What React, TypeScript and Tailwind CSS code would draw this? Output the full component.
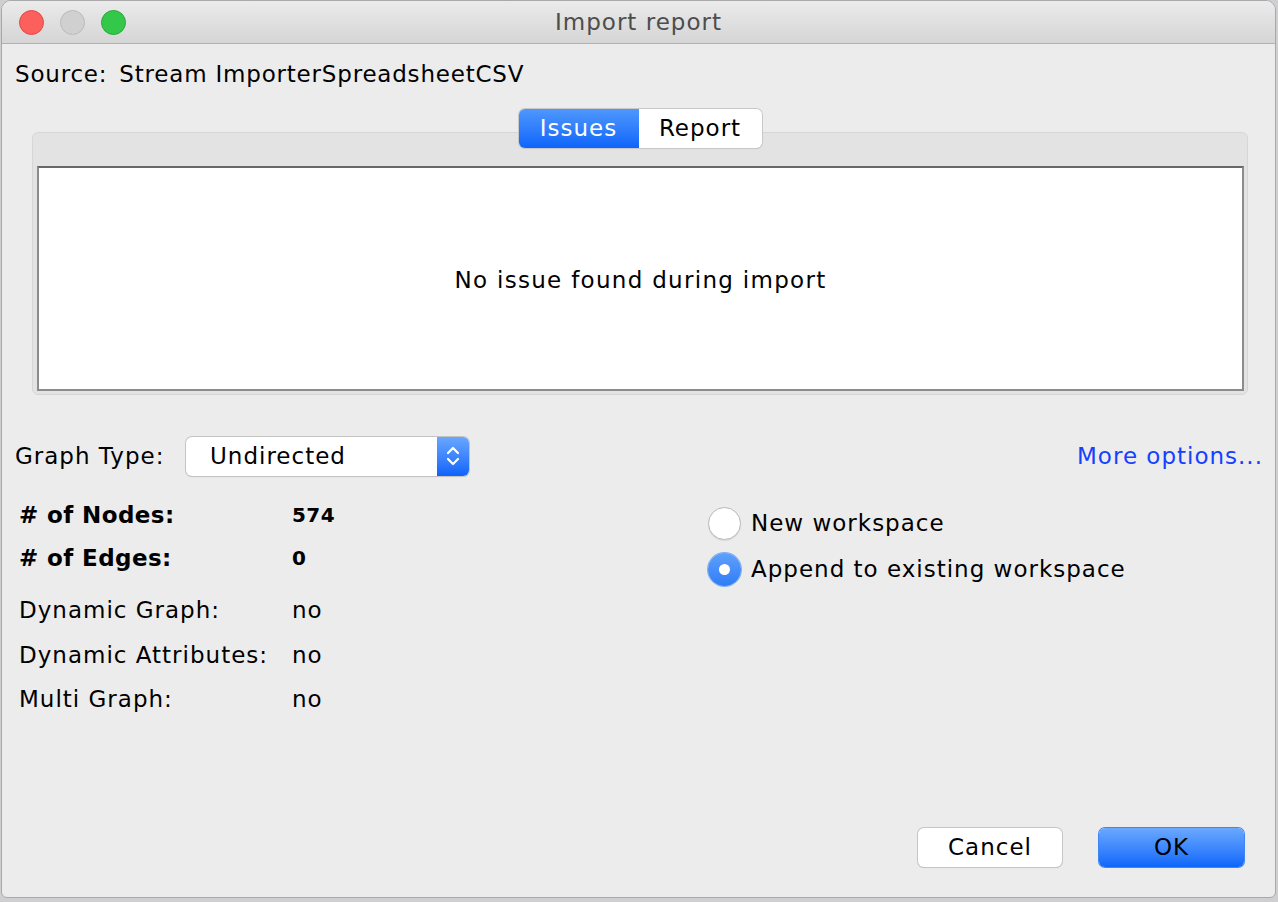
import React from 'react';

const font = { fontFamily: '"DejaVu Sans", "Liberation Sans", sans-serif' };

const StatRow = ({ label, value, bold }: { label: string; value: string; bold?: boolean }) => (
  <div className={`flex items-center h-[26px] ${bold ? 'font-bold tracking-[0.4px]' : ''}`}>
    <span className="w-[273px]">{label}</span>
    <span className={bold ? 'text-[20px]' : ''}>{value}</span>
  </div>
);

const Radio = ({ label, checked }: { label: string; checked?: boolean }) => (
  <div className="flex items-center h-[34px] gap-[10px]">
    {checked ? (
      <span className="w-[33px] h-[33px] rounded-full bg-gradient-to-b from-[#5ea0fb] to-[#2f7cf6] flex items-center justify-center shadow-[0_0_0_1px_#7fb0f8]">
        <span className="w-[11px] h-[11px] rounded-full bg-white" />
      </span>
    ) : (
      <span className="w-[33px] h-[33px] rounded-full bg-white border border-[#b9b9b9] shadow-[0_1px_1px_rgba(0,0,0,0.08)]" />
    )}
    <span>{label}</span>
  </div>
);

export default function App() {
  return (
    <div className="w-[1278px] h-[902px] bg-[#cfcfd2] overflow-hidden text-[23px] tracking-[1px] text-black" style={font}>
      <div className="ml-[1px] w-[1275px] h-[898px] bg-[#ececec] rounded-t-[10px] rounded-b-[6px] border border-[#a9a9a9] overflow-hidden flex flex-col">
        {/* Title bar */}
        <div className="relative h-[43px] shrink-0 bg-gradient-to-b from-[#ebebeb] to-[#d5d5d5] border-b border-[#b1b1b1] flex items-center pl-[17px] gap-[16px]">
          <span className="w-[25px] h-[25px] rounded-full bg-[#fc605c] border border-[#de4a45]" />
          <span className="w-[25px] h-[25px] rounded-full bg-[#d0d0d0] border border-[#bababa]" />
          <span className="w-[25px] h-[25px] rounded-full bg-[#34c84a] border border-[#25a83a]" />
          <div className="absolute inset-0 flex items-center justify-center text-[#4d4d4d] text-[23px]">Import report</div>
        </div>

        {/* Source */}
        <div className="mt-[17px] pl-[13px] h-[26px] leading-[26px] tracking-[0.8px] flex">
          <span>Source:</span>
          <span className="ml-[12px]">Stream ImporterSpreadsheetCSV</span>
        </div>

        {/* Tabs + panel */}
        <div className="mt-[22px] ml-[30px] w-[1216px] flex flex-col">
          <div className="relative z-10 flex justify-center h-[39px]">
            <div className="flex rounded-[6px] shadow-[0_0_0_1px_#c8c8c8,0_1px_1px_rgba(0,0,0,0.15)] overflow-hidden">
              <div className="w-[120px] flex items-center justify-center bg-gradient-to-b from-[#4e97fd] to-[#0c64fb] text-white">Issues</div>
              <div className="w-[123px] flex items-center justify-center bg-white">Report</div>
            </div>
          </div>
          <div className="-mt-[16px] h-[263px] bg-[#e3e3e3] border border-[#d6d6d6] rounded-[6px] pt-[33px] pl-[4px] pr-[3px] pb-[3px] flex">
            <div className="flex-1 bg-white border-2 border-[#8c8c8c] border-t-[#686868] flex items-center justify-center pt-[4px] tracking-[1.3px]">
              No issue found during import
            </div>
          </div>
        </div>

        {/* Graph type row */}
        <div className="mt-[41px] flex items-center pl-[13px] pr-[12px] h-[40px]">
          <span className="w-[171px]">Graph Type:</span>
          <div className="w-[283px] h-[39px] flex rounded-[6px] bg-white shadow-[0_0_0_1px_#c4c4c4,0_1px_1px_rgba(0,0,0,0.2)] overflow-hidden">
            <div className="flex-1 flex items-center pl-[24px]">Undirected</div>
            <div className="w-[32px] bg-gradient-to-b from-[#6aa6fd] to-[#0b62fb] flex items-center justify-center">
              <svg width="16" height="24" viewBox="0 0 16 24" fill="none" stroke="white" strokeWidth="2.2" strokeLinecap="round" strokeLinejoin="round">
                <path d="M3 9 L8 4 L13 9" />
                <path d="M3 15 L8 20 L13 15" />
              </svg>
            </div>
          </div>
          <span className="ml-auto text-[#1540ff]">More options...</span>
        </div>

        {/* Stats + radios */}
        <div className="flex mt-[26px]">
          <div className="pl-[17px] w-[690px] flex flex-col">
            <StatRow label="# of Nodes:" value="574" bold />
            <div className="h-[17px]" />
            <StatRow label="# of Edges:" value="0" bold />
            <div className="h-[26px]" />
            <StatRow label="Dynamic Graph:" value="no" />
            <div className="h-[19px]" />
            <StatRow label="Dynamic Attributes:" value="no" />
            <div className="h-[18px]" />
            <StatRow label="Multi Graph:" value="no" />
          </div>
          <div className="flex flex-col gap-[12px] ml-[16px] mt-[4px]">
            <Radio label="New workspace" />
            <Radio label="Append to existing workspace" checked />
          </div>
        </div>

        {/* Buttons */}
        <div className="mt-auto mb-[30px] flex justify-end gap-[37px] pr-[31px]">
          <button className="w-[144px] h-[39px] rounded-[6px] bg-white shadow-[0_0_0_1px_#c6c6c6,0_1px_1px_rgba(0,0,0,0.2)]">Cancel</button>
          <button className="w-[145px] h-[39px] rounded-[6px] bg-gradient-to-b from-[#6aa8fd] to-[#0a66fb] shadow-[0_0_0_1px_#3d86f7]">OK</button>
        </div>
      </div>
    </div>
  );
}
